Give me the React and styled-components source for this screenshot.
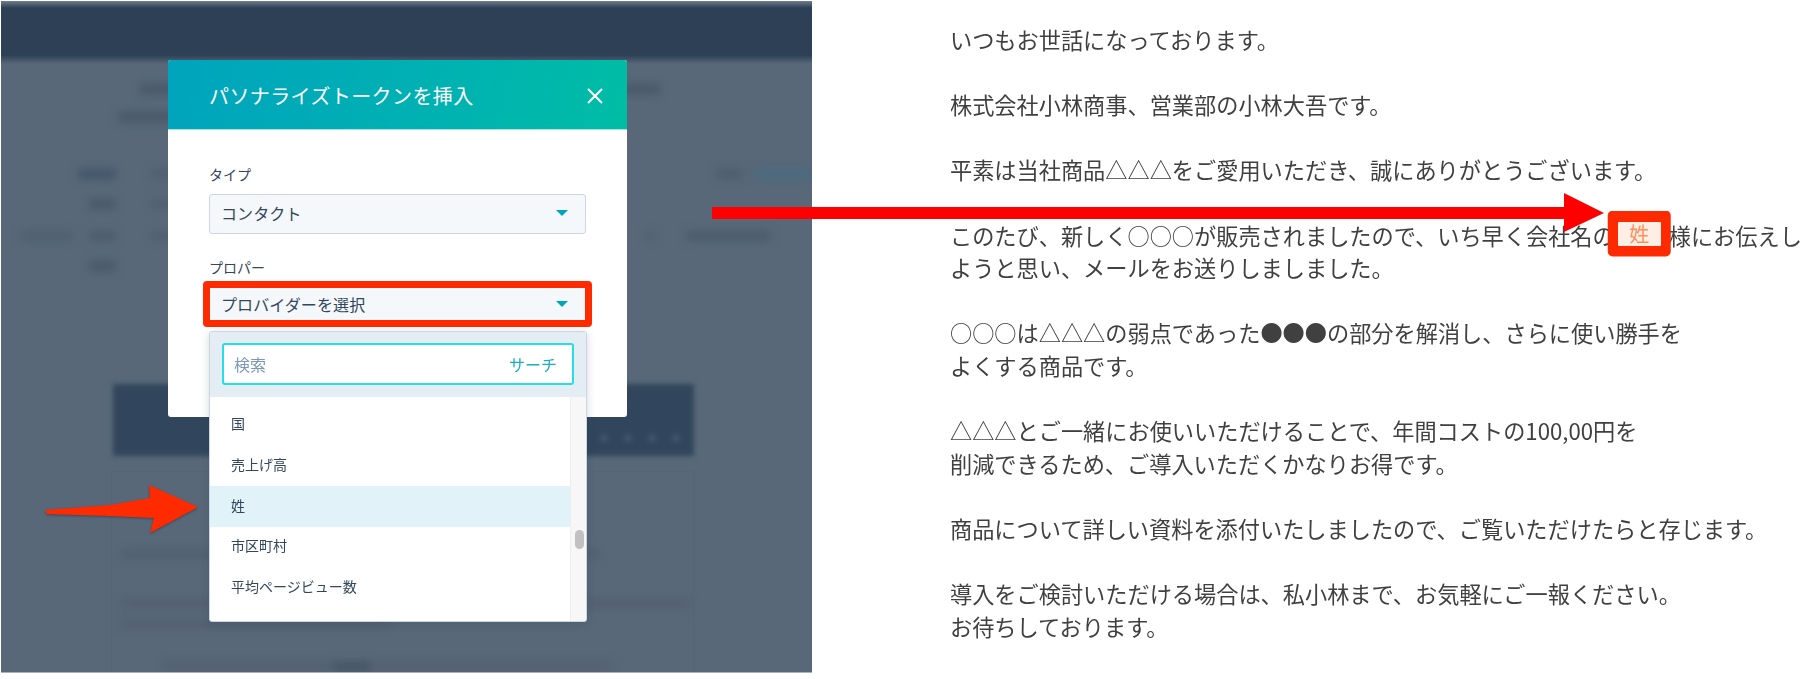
import React from 'react'
import styled, { createGlobalStyle } from 'styled-components'

const FONT = `'Noto Sans CJK JP', 'Noto Sans', sans-serif`

const GlobalStyle = createGlobalStyle`
  html, body {
    margin: 0;
    padding: 0;
    background: #fff;
    font-family: ${FONT};
  }
`

const Page = styled.div`
  position: relative;
  display: flex;
  width: 1816px;
  height: 679px;
  overflow: hidden;
`

const LeftPanel = styled.div`
  position: relative;
  flex: none;
  width: 811px;
  height: 672px;
  margin: 1px 0 0 1px;
  padding: 59px 0 0 167px;
  box-sizing: border-box;
  background: #586879;
  border-bottom: 1px solid #a9b2bc;
`

/* the blurred product page behind the dialog */
const Backdrop = styled.div`
  position: absolute;
  inset: 0;
  overflow: hidden;
  display: flex;
  flex-direction: column;
`

const TopBand = styled.div`
  flex: none;
  height: 64px;
  background: linear-gradient(#6f7d8b 0, #2d4056 7px, #2d4056 54px, #586879 63px);
`

const SmudgeRow = styled.div`
  display: flex;
  flex: none;
  height: 10px;
  margin-top: ${(p) => p.$top}px;
`

const Smudge = styled.div`
  flex: none;
  width: ${(p) => p.$w}px;
  height: ${(p) => p.$h || 10}px;
  margin-left: ${(p) => p.$gap}px;
  background: ${(p) => p.$c || '#48586a'};
  border-radius: 3px;
  filter: blur(4px);
`

const DarkCard = styled.div`
  flex: none;
  display: flex;
  flex-direction: column;
  justify-content: flex-end;
  box-sizing: border-box;
  width: 581px;
  height: 72px;
  margin: 113px 0 0 112px;
  padding-bottom: 14px;
  background: #31465c;
  filter: blur(2.5px);
`

const CardDots = styled.div`
  display: flex;
  justify-content: flex-end;
  gap: 16px;
  padding-right: 14px;
`

const Dot = styled.span`
  width: 8px;
  height: 8px;
  border-radius: 50%;
  background: #40566d;
`

const CardBody = styled.div`
  flex: 1;
  width: 581px;
  margin: 15px 0 0 110px;
  padding-top: 78px;
  border: 1px solid rgba(60, 75, 90, 0.08);
  border-bottom: 0;
`

const Modal = styled.div`
  position: relative;
  width: 459px;
  height: 357px;
  background: #fff;
  border-radius: 3px;
  filter: blur(0.4px);
`

const ModalHeader = styled.div`
  display: flex;
  align-items: center;
  justify-content: space-between;
  box-sizing: border-box;
  height: 70px;
  padding: 2px 23px 0 41px;
  background: linear-gradient(100deg, #00a4bd 0%, #00b3b0 65%, #00bda5 100%);
  border-radius: 3px 3px 0 0;
  border-bottom: 1px solid #a8e3e3;
`

const ModalTitle = styled.h2`
  margin: 0;
  color: #fff;
  font-size: 20px;
  font-weight: 400;
  line-height: 28px;
  letter-spacing: 0.4px;
`

const ModalBody = styled.div`
  padding: 34px 41px 0;
`

const FieldLabel = styled.div`
  margin-bottom: ${(p) => p.$gap}px;
  color: #33475b;
  font-size: 14px;
  line-height: 20px;
`

const SelectBox = styled.div`
  position: relative;
  display: flex;
  align-items: center;
  justify-content: space-between;
  box-sizing: border-box;
  height: 40px;
  margin-bottom: 23px;
  padding: 0 17px ${(p) => p.$lift || 0}px 11px;
  color: #33475b;
  font-size: 16px;
  letter-spacing: 0.1px;
  background: #f5f8fa;
  border: 1px solid #cbd6e2;
  border-radius: 3px;
`

const Caret = styled.span`
  width: 0;
  height: 0;
  border-left: 6px solid transparent;
  border-right: 6px solid transparent;
  border-top: 6px solid #00a4bd;
`

const RedFrame = styled.div`
  position: absolute;
  top: -4px;
  bottom: -4px;
  left: -7px;
  right: -7px;
  border: 7px solid #ff2a00;
  border-radius: 4px;
`

const Dropdown = styled.div`
  position: absolute;
  top: 271px;
  left: 41px;
  width: 378px;
  height: 291px;
  box-sizing: border-box;
  display: flex;
  flex-direction: column;
  background: #fff;
  border: 1px solid #cbd6e2;
  border-radius: 3px;
  box-shadow: 0 2px 8px rgba(40, 60, 80, 0.2);
  overflow: hidden;
`

const SearchArea = styled.div`
  flex: none;
  height: 65px;
  padding: 11px 12px 0;
  box-sizing: border-box;
  background: #e5edf4;
`

const SearchInput = styled.div`
  display: flex;
  align-items: center;
  justify-content: space-between;
  box-sizing: border-box;
  height: 42px;
  padding: 0 15px 0 10px;
  background: #fff;
  border: 2px solid #27dde6;
  border-radius: 3px;
  font-size: 16px;
`

const Placeholder = styled.span`
  color: #7c98b6;
`

const SearchHint = styled.span`
  color: #18aec6;
  font-size: 16px;
`

const ListArea = styled.div`
  flex: 1;
  display: flex;
  min-height: 0;
`

const OptionList = styled.ul`
  flex: 1;
  list-style: none;
  margin: 0;
  padding: 8px 0 0;
`

const Option = styled.li`
  box-sizing: border-box;
  height: 40.7px;
  padding-left: 21px;
  color: #33475b;
  font-size: 14px;
  line-height: ${(p) => (p.$active ? 38 : 37)}px;
  background: ${(p) => (p.$active ? '#e1f3f8' : 'transparent')};
`

const ScrollTrack = styled.div`
  flex: none;
  width: 16px;
  padding: 133px 0 0 4px;
  box-sizing: border-box;
  background: #f7f7f7;
  border-left: 1px solid #eeeeee;
`

const ScrollThumb = styled.div`
  width: 9px;
  height: 19px;
  background: #c1c1c1;
  border-radius: 5px;
`

const Letter = styled.div`
  padding: 23px 0 0 138px;
  color: #404040;
  font-size: 22.2px;
  line-height: 32.6px;
  white-space: nowrap;
  filter: blur(0.5px);
`

const Paragraph = styled.p`
  margin: 0 0 32.6px;
`

const Token = styled.span`
  display: inline-block;
  width: 43px;
  height: 24px;
  margin: 0 8px 0 3px;
  color: #ff8f59;
  font-size: 20px;
  line-height: 24px;
  text-align: center;
  vertical-align: 3px;
  background: #fdeee6;
  border-radius: 1px;
  box-shadow: 0 0 0 11px #ff2a00;
  clip-path: inset(-11px -10px -11px -10px round 5px);
`

const Annotation = styled.svg`
  position: absolute;
  left: 0;
  top: 0;
  pointer-events: none;
`

function BlurredPage() {
  return (
    <Backdrop>
      <TopBand />
      <SmudgeRow $top={19}>
        <Smudge $gap={138} $w={522} />
      </SmudgeRow>
      <SmudgeRow $top={18}>
        <Smudge $gap={117} $w={60} />
      </SmudgeRow>
      <SmudgeRow $top={47}>
        <Smudge $gap={77} $w={38} $c="#44546a" />
        <Smudge $gap={35} $w={30} $c="#4f5f70" />
        <Smudge $gap={535} $w={27} $c="#4d5d6e" />
        <Smudge $gap={13} $w={60} $c="#4a6a80" />
      </SmudgeRow>
      <SmudgeRow $top={20}>
        <Smudge $gap={88} $w={27} />
        <Smudge $gap={35} $w={30} $c="#4f5f70" />
      </SmudgeRow>
      <SmudgeRow $top={22}>
        <Smudge $gap={20} $w={52} $c="#50606f" />
        <Smudge $gap={16} $w={27} $c="#4c5c6c" />
        <Smudge $gap={35} $w={30} $c="#4f5f70" />
        <Smudge $gap={465} $w={10} $c="#50606f" />
        <Smudge $gap={30} $w={85} $c="#4b5b6d" />
      </SmudgeRow>
      <SmudgeRow $top={20}>
        <Smudge $gap={88} $w={27} />
      </SmudgeRow>
      <DarkCard>
        <CardDots>
          <Dot />
          <Dot />
          <Dot />
          <Dot />
        </CardDots>
      </DarkCard>
      <CardBody>
        <Smudge $gap={8} $w={480} $h={8} $c="#515f70" />
        <SmudgeRow $top={41}>
          <Smudge $gap={8} $w={570} $h={8} $c="#535f70" />
        </SmudgeRow>
        <SmudgeRow $top={11}>
          <Smudge $gap={8} $w={270} $h={8} $c="#535f70" />
        </SmudgeRow>
        <SmudgeRow $top={32}>
          <Smudge $gap={50} $w={170} $h={8} $c="#535f70" />
          <Smudge $gap={0} $w={40} $h={9} $c="#445264" />
          <Smudge $gap={0} $w={240} $h={8} $c="#535f70" />
        </SmudgeRow>
      </CardBody>
    </Backdrop>
  )
}

const OPTIONS = ['国', '売上げ高', '姓', '市区町村', '平均ページビュー数']

export default function App() {
  return (
    <Page>
      <GlobalStyle />
      <LeftPanel>
        <BlurredPage />
        <Modal>
          <ModalHeader>
            <ModalTitle>パソナライズトークンを挿入</ModalTitle>
            <svg width="18" height="18" viewBox="0 0 18 18">
              <path d="M2 2 L16 16 M16 2 L2 16" stroke="#fff" strokeWidth="2" fill="none" />
            </svg>
          </ModalHeader>
          <ModalBody>
            <FieldLabel $gap={10}>タイプ</FieldLabel>
            <SelectBox $lift={2}>
              コンタクト
              <Caret />
            </SelectBox>
            <FieldLabel $gap={7}>プロパー</FieldLabel>
            <SelectBox>
              プロバイダーを選択
              <Caret />
              <RedFrame />
            </SelectBox>
          </ModalBody>
          <Dropdown>
            <SearchArea>
              <SearchInput>
                <Placeholder>検索</Placeholder>
                <SearchHint>サーチ</SearchHint>
              </SearchInput>
            </SearchArea>
            <ListArea>
              <OptionList>
                {OPTIONS.map((name) => (
                  <Option key={name} $active={name === '姓'}>
                    {name}
                  </Option>
                ))}
              </OptionList>
              <ScrollTrack>
                <ScrollThumb />
              </ScrollTrack>
            </ListArea>
          </Dropdown>
        </Modal>
      </LeftPanel>
      <Letter>
        <Paragraph>いつもお世話になっております。</Paragraph>
        <Paragraph>株式会社小林商事、営業部の小林大吾です。</Paragraph>
        <Paragraph>平素は当社商品△△△をご愛用いただき、誠にありがとうございます。</Paragraph>
        <Paragraph>
          このたび、新しく○○○が販売されましたので、いち早く会社名の<Token>姓</Token>様にお伝えし
          <br />
          ようと思い、メールをお送りしましました。
        </Paragraph>
        <Paragraph>
          ○○○は△△△の弱点であった●●●の部分を解消し、さらに使い勝手を
          <br />
          よくする商品です。
        </Paragraph>
        <Paragraph>
          △△△とご一緒にお使いいただけることで、年間コストの100,00円を
          <br />
          削減できるため、ご導入いただくかなりお得です。
        </Paragraph>
        <Paragraph>商品について詳しい資料を添付いたしましたので、ご覧いただけたらと存じます。</Paragraph>
        <Paragraph>
          導入をご検討いただける場合は、私小林まで、お気軽にご一報ください。
          <br />
          お待ちしております。
        </Paragraph>
      </Letter>
      <Annotation width="1816" height="679" viewBox="0 0 1816 679">
        <polygon points="712,207 1564,207 1564,193 1604,213 1564,232 1564,219 712,219" fill="#ff0000" />
        <polygon
          points="45,510 110,505 150,498 149,485 198,507 150,533 154,518 110,516 47,514"
          fill="#ff2a00"
          style={{ filter: 'drop-shadow(0 1px 1px rgba(30,40,50,0.5))' }}
        />
      </Annotation>
    </Page>
  )
}
